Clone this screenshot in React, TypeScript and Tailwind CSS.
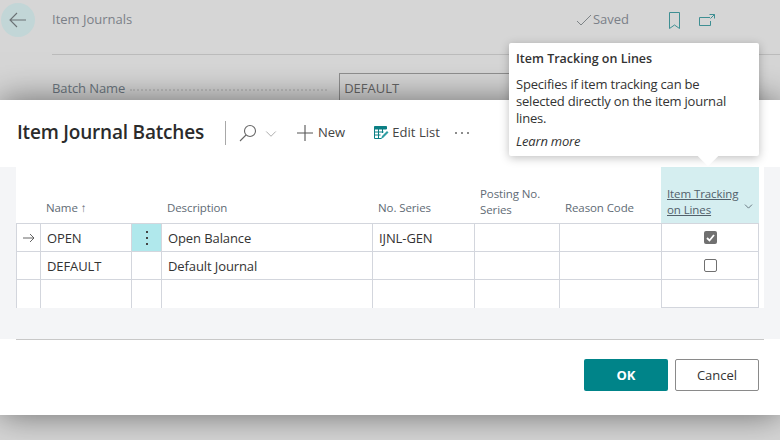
import { ChevronDown } from "lucide-react";

const font = { fontFamily: '"Open Sans", "Noto Sans", sans-serif' };

const rows = [
  { name: "OPEN", description: "Open Balance", series: "IJNL-GEN", current: true, checked: true },
  { name: "DEFAULT", description: "Default Journal", series: "", current: false, checked: false },
  { name: "", description: "", series: "", current: false, checked: null },
];

const cell = "border-t border-l border-[#d3d6dd] flex items-center text-[13px] tracking-[-0.1px] text-[#333]";
const textCell = `${cell} pl-[6px] pt-[2px]`;

const BackIcon = () => (
  <svg width="18" height="16" viewBox="0 0 18 16" fill="none" stroke="#6b7174" strokeWidth="1.1">
    <path d="M1 8h16M8 1 1 8l7 7" />
  </svg>
);

const SearchIcon = () => (
  <svg width="18" height="18" viewBox="0 0 18 18" fill="none" stroke="#666" strokeWidth="1.1">
    <circle cx="11" cy="7" r="5.500" />
    <path d="M7 11 1 17" />
  </svg>
);

const PlusIcon = () => (
  <svg width="16" height="16" viewBox="0 0 16 16" fill="none" stroke="#555" strokeWidth="1.1">
    <path d="M8 0v16M0 8h16" />
  </svg>
);

const EditListIcon = () => (
  <svg width="15" height="14" viewBox="0 0 15 14" fill="none">
    <path d="M.5.5h12v2.500H.5z" fill="#0b7f84" stroke="#0b7f84" />
    <path d="M.5 3v9.500h7M4.500 3v9.500M8.500 3v4M.5 6h9M.5 9h6" stroke="#0b7f84" />
    <path d="M7 13l1-3 5-5 1.500 1.500-5 5z" fill="#2f9ea3" />
  </svg>
);

const SavedCheck = () => (
  <svg width="16" height="12" viewBox="0 0 16 12" fill="none" stroke="#7d8386" strokeWidth="1">
    <path d="M1 7l4 4L15 1" />
  </svg>
);

const BookmarkIcon = () => (
  <svg width="11" height="17" viewBox="0 0 11 17" fill="none" stroke="#3f8f93" strokeWidth="1">
    <path d="M.5.5h10v16l-5-3.500-5 3.500z" />
  </svg>
);

const OpenIcon = () => (
  <svg width="16" height="12" viewBox="0 0 16 12" fill="none" stroke="#3f8f93" strokeWidth="1">
    <path d="M11 3.500H.5v8h11V7M10.500.5h5v4M15.500.5l-4 4" />
  </svg>
);

const RowArrow = () => (
  <svg width="12" height="10" viewBox="0 0 12 10" fill="none" stroke="#555" strokeWidth="0.9">
    <path d="M0 5h11M7 1l4 4-4 4" />
  </svg>
);

function HeaderCell({ children, className = "pb-[7px]" }: { children?: React.ReactNode; className?: string }) {
  return (
    <div className={`flex flex-col justify-end pl-[6px] text-[11.5px] leading-[16px] tracking-[-0.1px] text-[#616b75] ${className}`}>
      {children}
    </div>
  );
}

export default function App() {
  return (
    <div className="relative w-[780px] h-[440px] overflow-hidden bg-[#d6d6d6]" style={font}>
      {/* page behind the dialog */}
      <div className="h-[100px] overflow-hidden">
        <div className="flex h-[40px] items-center">
          <div className="ml-[1px] flex h-[34px] w-[34px] items-center justify-center rounded-full bg-[#c2d6d7]">
            <BackIcon />
          </div>
          <span className="ml-[17px] text-[13px] text-[#7b8088]">Item Journals</span>
          <div className="ml-auto mr-[65px] flex items-center">
            <SavedCheck />
            <span className="ml-[1px] text-[13px] text-[#7b8088]">Saved</span>
            <span className="ml-[40px] flex"><BookmarkIcon /></span>
            <span className="ml-[19px] flex"><OpenIcon /></span>
          </div>
        </div>
        <div className="ml-[52px] mt-[14px] border-t border-[#bcbcbc]" />
        <div className="ml-[52px] mt-[18px] flex h-[40px] items-start">
          <span className="mt-[6px] text-[13px] tracking-[-0.1px] text-[#6c7680]">Batch Name</span>
          <span className="mx-[5px] mt-[16px] h-0 flex-none w-[197px] border-t-2 border-dotted border-[#c0c0c0]" />
          <div className="ml-[7px] flex h-[40px] w-[420px] border border-[#8f8f8f] pl-[4px] pt-[5px] text-[13px] text-[#666]">
            DEFAULT
          </div>
        </div>
      </div>

      {/* dialog */}
      <div className="relative h-[315px] bg-white shadow-[0_0_32px_rgba(0,0,0,0.5)]">
        <div className="flex h-[67px] items-center pl-[17px] pb-[2px]">
          <h1 className="text-[19px] font-semibold tracking-[-0.2px] text-[#2b2b2b]">Item Journal Batches</h1>
          <span className="ml-[21px] h-[24px] w-px bg-[#a8a8a8]" />
          <span className="ml-[13px] flex"><SearchIcon /></span>
          <ChevronDown className="ml-[5px] mt-[3px] h-[18px] w-[18px] text-[#777]" strokeWidth={0.8} />
          <span className="ml-[17px] flex"><PlusIcon /></span>
          <span className="ml-[5px] text-[13px] text-[#444]">New</span>
          <span className="ml-[29px] flex"><EditListIcon /></span>
          <span className="ml-[3px] text-[13px] tracking-[0.05px] text-[#444]">Edit List</span>
          <span className="ml-[15px] flex gap-[4px]">
            <span className="h-[2px] w-[2px] rounded-full bg-[#666]" />
            <span className="h-[2px] w-[2px] rounded-full bg-[#666]" />
            <span className="h-[2px] w-[2px] rounded-full bg-[#666]" />
          </span>
        </div>

        <div className="h-[172px] bg-[#f4f5f7] px-[16px]">
          <div className="grid grid-cols-[24px_91px_30px_211px_102px_85px_102px_98px] grid-rows-[56px_28px_28px_29px] bg-white">
            <HeaderCell />
            <HeaderCell>Name ↑</HeaderCell>
            <HeaderCell />
            <HeaderCell>Description</HeaderCell>
            <HeaderCell>No. Series</HeaderCell>
            <HeaderCell className="pb-[5px]">
              <span>Posting No.</span>
              <span>Series</span>
            </HeaderCell>
            <HeaderCell>Reason Code</HeaderCell>
            <div className="flex items-end justify-between bg-[#d5eef0] pb-[5px] pl-[6px] pr-[4px] text-[11.5px] leading-[16px] tracking-[-0.1px] text-[#52606b]">
              <span className="underline">Item Tracking<br />on Lines</span>
              <ChevronDown className="mb-[5px] h-[13px] w-[13px] text-[#52606b]" strokeWidth={1.5} />
            </div>

            {rows.map((row, i) => (
              <div key={i} className="contents">
                <div className={`${cell} justify-center`}>{row.current && <RowArrow />}</div>
                <div className={textCell}>{row.name}</div>
                <div className={`${cell} justify-center ${row.current ? "bg-[#b0e8ec]" : ""}`}>
                  {row.current && (
                    <span className="flex flex-col gap-[4px]">
                      <span className="h-[2px] w-[2px] bg-[#444]" />
                      <span className="h-[2px] w-[2px] bg-[#444]" />
                      <span className="h-[2px] w-[2px] bg-[#444]" />
                    </span>
                  )}
                </div>
                <div className={textCell}>{row.description}</div>
                <div className={textCell}>{row.series}</div>
                <div className={cell} />
                <div className={cell} />
                <div className={`${cell} justify-center border-r ${i === 2 ? "border-b" : ""}`}>
                  {row.checked === true && (
                    <span className="flex h-[13px] w-[13px] items-center justify-center rounded-[2px] bg-[#707070]">
                      <svg width="9" height="8" viewBox="0 0 9 8" fill="none" stroke="#fff" strokeWidth="1.800">
                        <path d="M1 4l2.500 2.500L8 1" />
                      </svg>
                    </span>
                  )}
                  {row.checked === false && (
                    <span className="h-[13px] w-[13px] rounded-[2px] border border-[#707070] bg-white" />
                  )}
                </div>
              </div>
            ))}
          </div>
        </div>

        <div className="mx-[16px] border-t border-[#c8c8c8]" />
        <div className="flex justify-end gap-[7px] pr-[21px] pt-[19px]">
          <button className="h-[32px] w-[84px] rounded-[2px] bg-[#008489] pt-[1px] text-[13px] font-bold text-white">OK</button>
          <button className="h-[32px] w-[84px] rounded-[2px] border border-[#8a8a8a] bg-white pt-[1px] text-[13px] font-medium text-[#333]">Cancel</button>
        </div>
      </div>

      {/* teaching tip over the column caption */}
      <div className="absolute left-[509px] top-[43px] z-20 h-[113px] w-[250px] rounded-[2px] bg-white px-[7px] pt-[7px] shadow-[0_2px_10px_rgba(0,0,0,0.25)]">
        <div className="text-[12.5px] font-semibold leading-[18px] text-[#333]">Item Tracking on Lines</div>
        <div className="mt-[8px] text-[13px] leading-[17px] tracking-[-0.2px] text-[#333]">
          Specifies if item tracking can be<br />selected directly on the item journal<br />lines.
        </div>
        <div className="mt-[6px] text-[13px] italic leading-[17px] tracking-[-0.2px] text-[#333]">Learn more</div>
        <div className="absolute left-[191px] top-[104px] h-[16px] w-[16px] rotate-45 bg-white" />
      </div>
    </div>
  );
}
